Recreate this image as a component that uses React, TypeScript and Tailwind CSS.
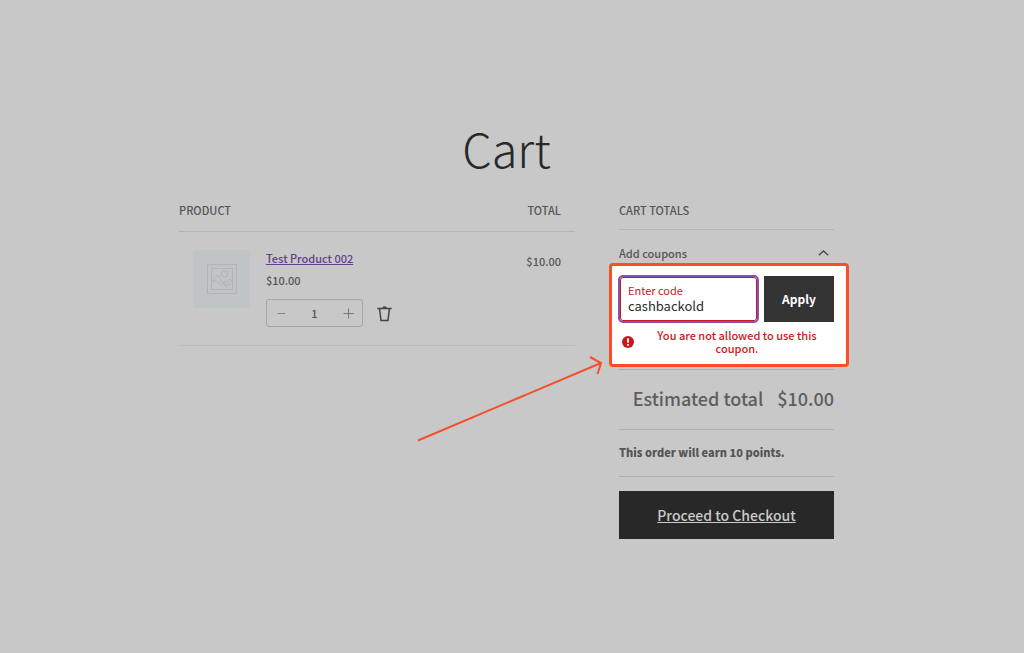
import React, { useState } from 'react';

const PlaceholderImage = () => (
  <div className="flex h-[58px] w-[57px] items-center justify-center rounded-sm bg-[#c1c4c4]">
    <svg
      width="30"
      height="30"
      viewBox="0 0 30 30"
      fill="none"
      stroke="#b1b4b4"
      strokeWidth="1"
      aria-hidden="true"
    >
      <rect x="0.5" y="0.5" width="29" height="29" />
      <rect x="4.5" y="4.5" width="21" height="21" />
      <circle cx="17.5" cy="10" r="3.2" />
      <path d="M5 18 L8 14 L11 11 L15 18 L20 24 M5 17 L10 17 L16 23 M15 20 L18 17 L20 18 L23 15 L25 18 M17 18 L19 21 L22 21 L23 18" />
    </svg>
  </div>
);

const TrashIcon = () => (
  <svg
    width="15"
    height="17"
    viewBox="0 0 15 17"
    fill="none"
    stroke="#444"
    strokeWidth="1.5"
    aria-hidden="true"
  >
    <path d="M0.3 3.4 H14.7 M2.5 3.4 L4 15.4 H11 L12.5 3.4" />
    <path d="M5.2 3 Q5.2 1.2 7.5 1.2 Q9.8 1.2 9.8 3 Z" fill="#444" stroke="none" />
  </svg>
);

const ChevronUp = () => (
  <svg
    width="11"
    height="6"
    viewBox="0 0 11 6"
    fill="none"
    stroke="#4a4a4a"
    strokeWidth="1.4"
    aria-hidden="true"
  >
    <path d="M0.8 5.2 L5.5 1 L10.2 5.2" />
  </svg>
);

const ErrorIcon = () => (
  <svg
    className="shrink-0"
    width="12"
    height="12"
    viewBox="0 0 12 12"
    aria-hidden="true"
  >
    <circle cx="6" cy="6" r="6" fill="#cc1818" />
    <path d="M6 2.2 V6.8 M6 8 V9.8" stroke="#fff" strokeWidth="1.8" />
  </svg>
);

const Arrow = () => (
  <svg
    className="absolute right-full top-[86px] mr-[7px]"
    width="190"
    height="92"
    viewBox="0 0 190 92"
    fill="none"
    stroke="#f54e2a"
    strokeWidth="2"
    aria-hidden="true"
  >
    <path d="M3 88.5 L186 11 M175 5 L186 11 L182.5 22" />
  </svg>
);

const CartItems = () => {
  const [quantity, setQuantity] = useState(1);

  return (
    <table className="w-full border-collapse text-left text-[11px] font-medium leading-4">
      <thead>
        <tr className="border-b border-[#b3b3b3]">
          <th className="pb-[13px] pt-0 font-medium">PRODUCT</th>
          <th className="pb-[13px] pr-[14px] pt-0 text-right font-medium">
            TOTAL
          </th>
        </tr>
      </thead>
      <tbody>
        <tr className="border-b border-[#bababa] align-top">
          <td className="pb-[18px] pl-[14px] pt-[18px]">
            <div className="flex gap-4">
              <PlaceholderImage />
              <div>
                <a
                  href="#product"
                  className="block text-[#643e8c] underline underline-offset-1"
                >
                  Test Product 002
                </a>
                <div className="mt-[6px]">$10.00</div>
                <div className="mt-[11px] flex items-center gap-[14px]">
                  <div className="flex h-7 w-[97px] items-center rounded-[3px] border border-[#a6a6a6]">
                    <button
                      type="button"
                      aria-label="Reduce quantity"
                      className="flex h-full w-7 items-center justify-center text-[#838383]"
                      onClick={() => setQuantity((q) => (q > 1 ? q - 1 : 1))}
                    >
                      <svg width="9" height="11" stroke="currentColor">
                        <path d="M0.5 5.5 H8" />
                      </svg>
                    </button>
                    <input
                      type="text"
                      inputMode="numeric"
                      aria-label="Quantity"
                      className="w-0 min-w-0 flex-1 bg-transparent text-center outline-none"
                      value={quantity}
                      onChange={(e) => setQuantity(Number(e.target.value) || 1)}
                    />
                    <button
                      type="button"
                      aria-label="Increase quantity"
                      className="flex h-full w-7 items-center justify-center text-[#777]"
                      onClick={() => setQuantity((q) => q + 1)}
                    >
                      <svg width="11" height="11" stroke="currentColor">
                        <path d="M0.5 5.5 H10.5 M5.5 0.5 V10.5" />
                      </svg>
                    </button>
                  </div>
                  <button type="button" aria-label="Remove item">
                    <TrashIcon />
                  </button>
                </div>
              </div>
            </div>
          </td>
          <td className="pr-[14px] pt-[21px] text-right">$10.00</td>
        </tr>
      </tbody>
    </table>
  );
};

const CouponForm = () => {
  const [code, setCode] = useState('cashbackold');

  return (
    <div className="relative -ml-[10px] -mr-[15px] rounded-[4px] border-[3px] border-[#fa4d28] bg-white pb-[9px] pl-[6px] pr-3 pt-[9px]">
      <Arrow />
      <form className="flex gap-[5px]" onSubmit={(e) => e.preventDefault()}>
        <div className="min-w-0 flex-1 rounded-[5px] border-2 border-[#7f54b3]">
          <div className="flex h-11 flex-col rounded-[3px] border border-[#cc1818] px-[7px] pt-1 font-normal">
            <label
              htmlFor="coupon"
              className="text-[11px] leading-4 text-[#cc1818]"
            >
              Enter code
            </label>
            <input
              id="coupon"
              type="text"
              className="w-full bg-transparent text-[13px] leading-4 text-[#2b2d2f] outline-none"
              value={code}
              onChange={(e) => setCode(e.target.value)}
            />
          </div>
        </div>
        <button
          type="submit"
          className="my-px w-[70px] bg-[#333] text-xs font-bold text-white"
        >
          Apply
        </button>
      </form>
      <div
        role="alert"
        className="mt-[6px] flex items-center pl-1 text-[11px] font-medium leading-[13px] text-[#cc1818]"
      >
        <ErrorIcon />
        <p className="flex-1 pl-4 pr-[10px] text-center">
          You are not allowed to use this coupon.
        </p>
      </div>
    </div>
  );
};

const CartTotals = () => (
  <aside className="w-[215px] shrink-0 text-[11px] font-medium leading-4">
    <h2 className="border-b border-[#b5b5b5] pb-[11px]">CART TOTALS</h2>
    <button
      type="button"
      className="mt-[15px] flex w-full items-center justify-between pb-[2px] pr-[5px]"
    >
      Add coupons
      <ChevronUp />
    </button>
    <CouponForm />
    <div className="mt-[2px] flex justify-end gap-[14px] border-y border-[#b0b0b0] pb-[19px] pt-4 text-lg leading-6 text-[#5e5e5e]">
      <span>Estimated total</span>
      <span>$10.00</span>
    </div>
    <div className="border-b border-[#b0b0b0] pb-4 pt-[14px] font-black">
      This order will earn 10 points.
    </div>
    <a
      href="#checkout"
      className="mt-[14px] flex h-12 items-center justify-center bg-[#282828] text-sm font-medium text-[#cbcbcb] underline underline-offset-1"
    >
      Proceed to Checkout
    </a>
  </aside>
);

const App = () => (
  <div className="min-h-screen bg-[#c8c8c8] pr-[11px] font-['Noto_Sans_CJK_SC',sans-serif] text-[#555]">
    <main className="mx-auto max-w-[655px] pt-[118px]">
      <h1 className="text-center text-[47px] font-light leading-[60px] text-[#282828]">
        Cart
      </h1>
      <div className="mt-6 flex items-start gap-11">
        <div className="min-w-0 flex-1">
          <CartItems />
        </div>
        <CartTotals />
      </div>
    </main>
  </div>
);

export default App;
